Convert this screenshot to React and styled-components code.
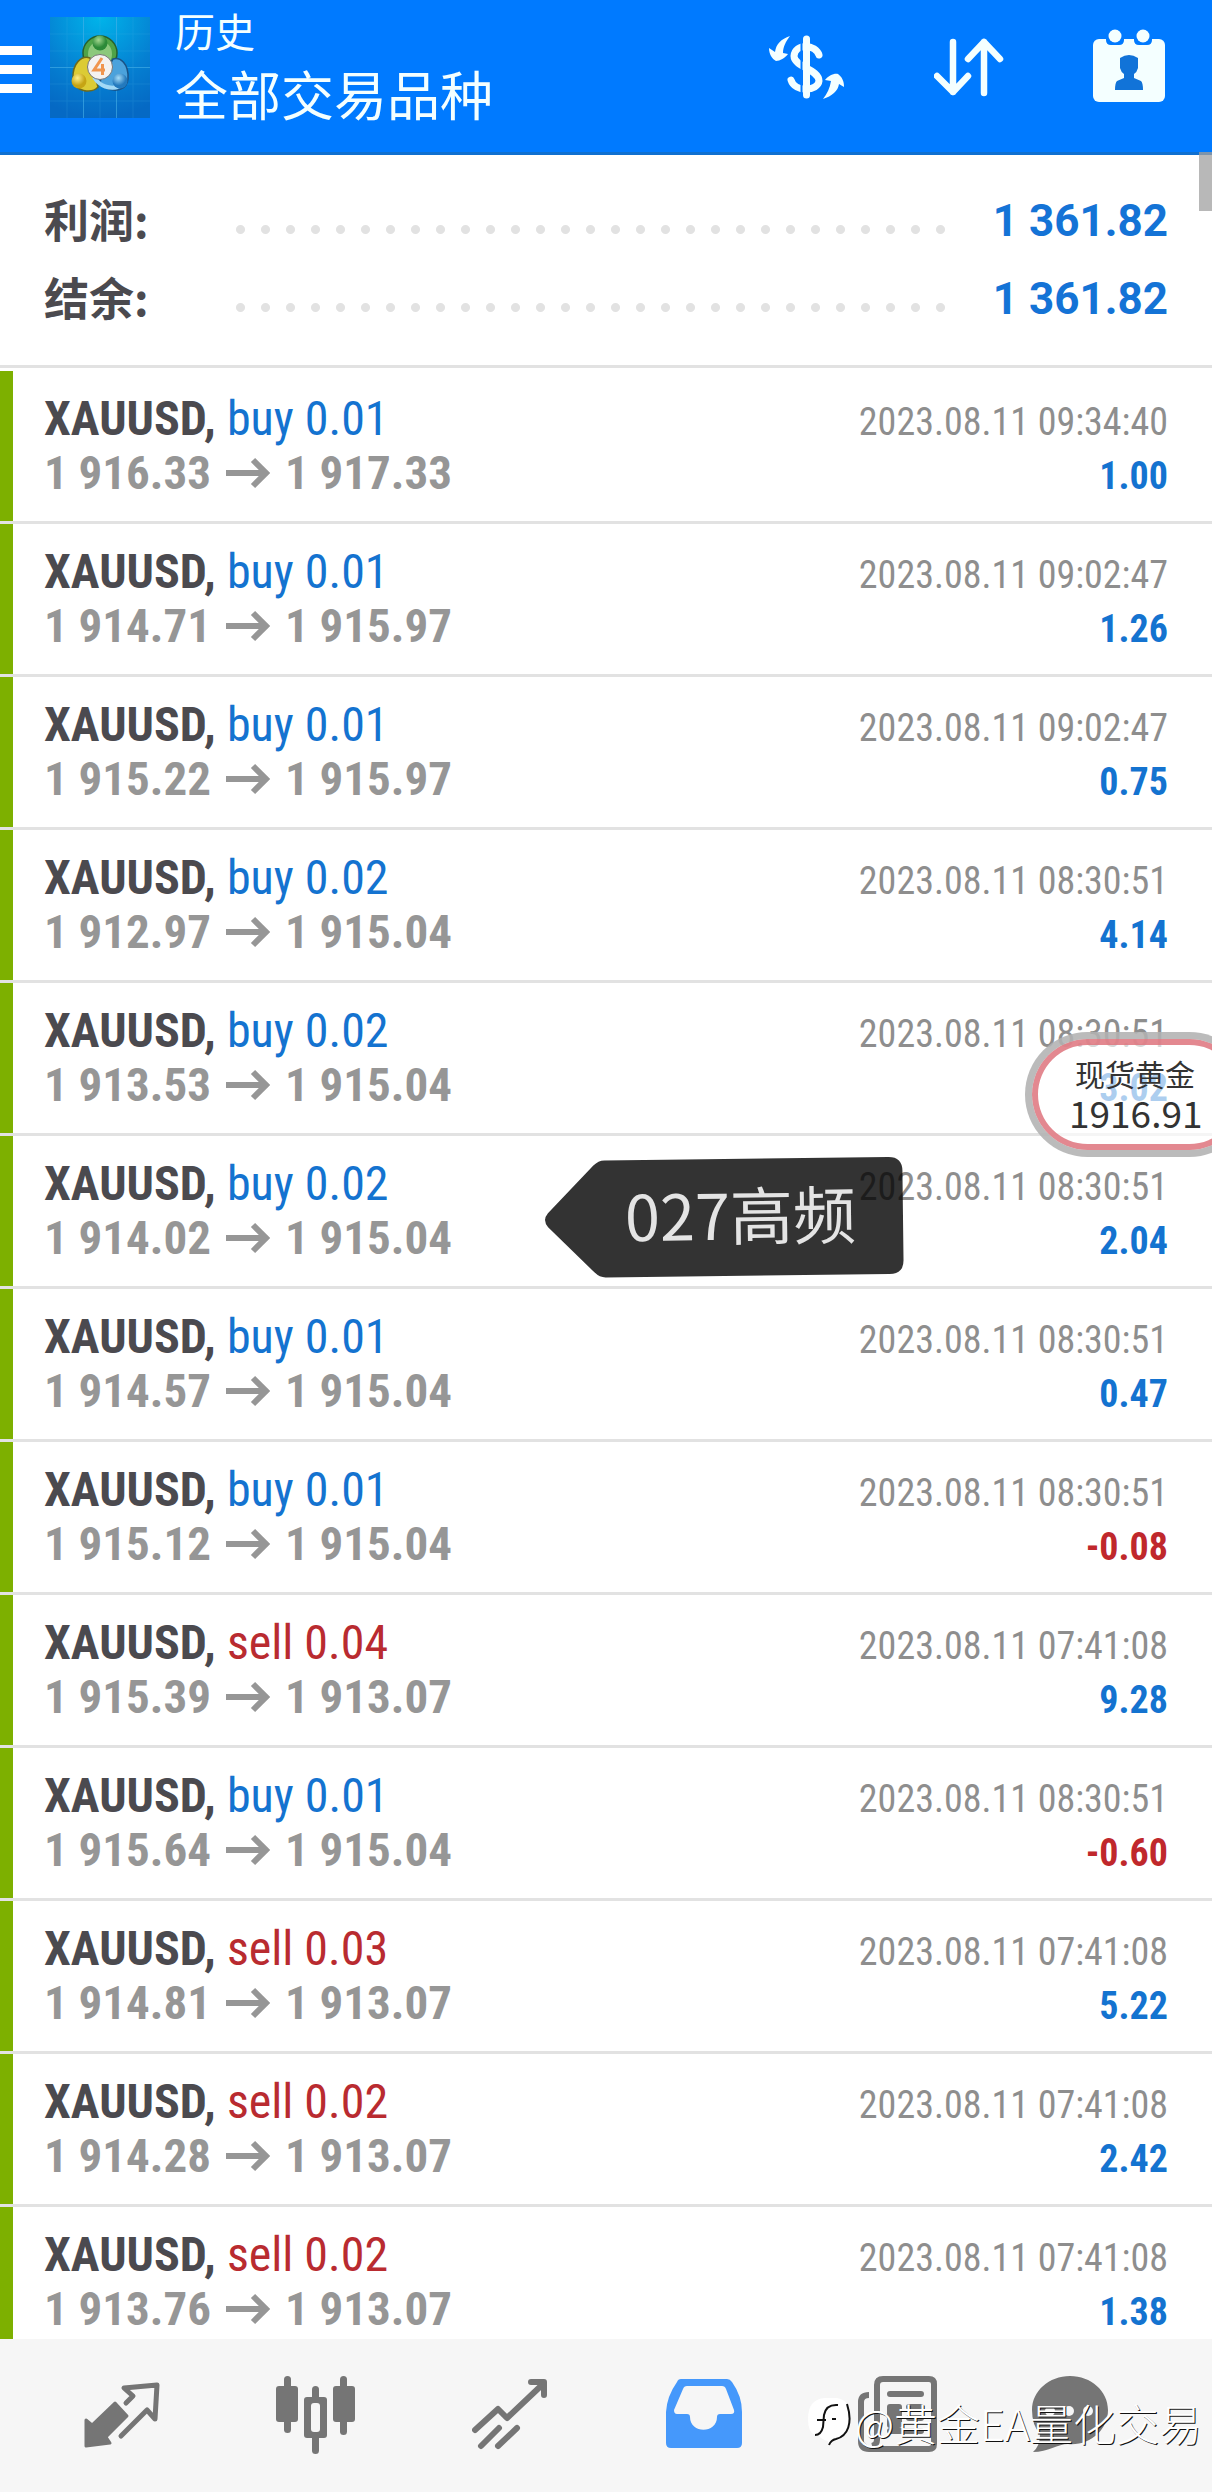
import React from "react";
import styled, { createGlobalStyle } from "styled-components";

const Global = createGlobalStyle`
  * { box-sizing: border-box; }
  body { margin: 0; background: #fff; font-family: "Roboto Condensed", "Liberation Sans Narrow", "Noto Sans CJK SC", sans-serif; }
  button { border: 0; padding: 0; background: none; color: inherit; font: inherit; cursor: pointer; }
  h1, p, dl, dd, dt, ul { margin: 0; padding: 0; font-weight: inherit; }
  svg { display: block; }
`;

const Screen = styled.div`
  display: flex;
  flex-direction: column;
  height: 100vh;
  overflow: hidden;
  position: relative;
  color: #4b4a4f;
`;

const TopBar = styled.header`
  flex: none;
  display: flex;
  align-items: flex-start;
  height: 155px;
  padding-right: 46px;
  background: #007aff;
  border-bottom: 3px solid #1070d0;
  color: #f4ffff;
`;

const MenuButton = styled.button`
  width: 32px;
  height: 48px;
  margin: 46px 18px 0 0;
  display: flex;
  flex-direction: column;
  gap: 10px;
`;

const MenuBar = styled.span`
  display: block;
  width: 100%;
  height: 9px;
  background: #fff;
`;

const LogoBox = styled.div`
  margin-top: 17px;
`;

const Titles = styled.div`
  flex: 1;
  padding-left: 25px;
  font-family: "Noto Sans CJK SC", sans-serif;
`;

const Section = styled.p`
  font-size: 40px;
  line-height: 60px;
`;

const Heading = styled.h1`
  font-size: 53px;
  line-height: 66px;
`;

const Actions = styled.div`
  display: flex;
  gap: 88px;
  padding-top: 29px;
`;

const Summary = styled.dl`
  flex: none;
  display: flex;
  flex-direction: column;
  height: 213px;
  margin-bottom: 3px;
  padding: 26px 44px 0;
  border-bottom: 3px solid #e2e2e2;
`;

const SummaryRow = styled.div`
  display: flex;
  align-items: center;
  height: 78px;
`;

const Label = styled.dt`
  width: 184px;
  padding-bottom: 2px;
  font: 700 45px/64px "Noto Sans CJK SC", sans-serif;
`;

const Dots = styled.span`
  flex: 1;
  height: 25px;
  margin-right: 44px;
  align-self: flex-end;
  margin-bottom: 17px;
  background: radial-gradient(circle, #e2e2e2 0 4px, transparent 5px) 0 0 / 25px 25px repeat-x;
`;

const Total = styled.dd`
  padding-top: 2px;
  font: 700 44px/64px Roboto, sans-serif;
  color: #1473d6;
`;

const List = styled.ul`
  flex: 1;
  min-height: 0;
  overflow: hidden;
  list-style: none;
`;

const Deal = styled.li`
  display: flex;
  height: 153px;
  padding-right: 44px;
  border-bottom: 3px solid #e2e2e2;

  &::before {
    content: "";
    width: 13px;
    margin-right: 31px;
    background: #7db000;
  }
`;

const Side = styled.div`
  padding-top: 21px;
  white-space: nowrap;
  ${(p) => p.$end && "margin-left: auto; text-align: right;"}
`;

const Title = styled.div`
  font-size: 48px;
  line-height: 54px;
  font-weight: 700;
`;

const Order = styled.span`
  font-weight: 400;
  color: ${(p) => (p.$sell ? "#b92b30" : "#1473d0")};
`;

const Prices = styled.div`
  display: flex;
  align-items: center;
  gap: 15px;
  font-size: 47px;
  line-height: 54px;
  font-weight: 700;
  color: #969696;
`;

const Time = styled.time`
  display: block;
  font-size: 38px;
  line-height: 54px;
  padding-top: 3px;
  color: #8e8e8e;
`;

const Profit = styled.div`
  font-size: 38px;
  line-height: 54px;
  font-weight: 700;
  color: ${(p) => (p.$loss ? "#c0282c" : "#1473d0")};
`;

const TabBar = styled.nav`
  flex: none;
  display: grid;
  grid-template-columns: repeat(5, 194fr) 150fr;
  height: 153px;
  padding: 0 67px 0 25px;
  background: #f6f6f6;
`;

const Tab = styled.button`
  display: flex;
  justify-content: center;
  align-items: flex-start;
  padding-top: 35px;
  color: ${(p) => (p.$active ? "#4598fb" : "#757575")};
`;

const ScrollThumb = styled.div`
  position: absolute;
  top: 152px;
  right: 0;
  width: 13px;
  height: 59px;
  background: rgba(160, 160, 160, 0.75);
`;

const QuoteBubble = styled.aside`
  position: absolute;
  top: 1032px;
  right: -40px;
  width: 227px;
  height: 125px;
  padding: 13px 0 0 35px;
  border: 7px solid rgba(150, 150, 150, 0.65);
  border-radius: 63px;
  background: rgba(255, 255, 255, 0.65);
  box-shadow: inset 0 0 0 6px rgba(222, 115, 124, 0.85);
  font-family: "Noto Sans CJK SC", sans-serif;
  color: #333;
`;

const QuoteName = styled.div`
  padding-left: 8px;
  font-size: 30px;
  line-height: 42px;
`;

const QuotePrice = styled.div`
  padding-left: 2px;
  font-size: 37px;
  line-height: 36px;
`;

const Tag = styled.div`
  position: absolute;
  top: 1158px;
  left: 545px;
  width: 359px;
  height: 120px;
  transform: rotate(-0.7deg);
`;

const TagText = styled.span`
  position: absolute;
  inset: 0 0 0 80px;
  font: 400 63px/110px "Noto Sans CJK SC", sans-serif;
  color: #e4e4e4;
`;

const Watermark = styled.div`
  position: absolute;
  right: 10px;
  bottom: 40px;
  display: flex;
  align-items: center;
  gap: 4px;
  font: 300 43px/60px "Noto Sans CJK SC", sans-serif;
  color: #fff;
  text-shadow: 1px 1px 0 #111;
  white-space: nowrap;
`;

const deals = [
  ["buy 0.01", "1 916.33", "1 917.33", "09:34:40", "1.00"],
  ["buy 0.01", "1 914.71", "1 915.97", "09:02:47", "1.26"],
  ["buy 0.01", "1 915.22", "1 915.97", "09:02:47", "0.75"],
  ["buy 0.02", "1 912.97", "1 915.04", "08:30:51", "4.14"],
  ["buy 0.02", "1 913.53", "1 915.04", "08:30:51", "3.02"],
  ["buy 0.02", "1 914.02", "1 915.04", "08:30:51", "2.04"],
  ["buy 0.01", "1 914.57", "1 915.04", "08:30:51", "0.47"],
  ["buy 0.01", "1 915.12", "1 915.04", "08:30:51", "-0.08"],
  ["sell 0.04", "1 915.39", "1 913.07", "07:41:08", "9.28"],
  ["buy 0.01", "1 915.64", "1 915.04", "08:30:51", "-0.60"],
  ["sell 0.03", "1 914.81", "1 913.07", "07:41:08", "5.22"],
  ["sell 0.02", "1 914.28", "1 913.07", "07:41:08", "2.42"],
  ["sell 0.02", "1 913.76", "1 913.07", "07:41:08", "1.38"],
];

const Logo = () => (
  <svg width="100" height="101" viewBox="0 0 100 101" aria-hidden="true">
    <defs>
      <radialGradient id="sky" cx=".5" cy="0" r="1">
        <stop offset="0" stopColor="#00b4ea" />
        <stop offset=".6" stopColor="#0580d2" />
        <stop offset="1" stopColor="#0569c4" />
      </radialGradient>
      <radialGradient id="g" cx=".4" cy=".3"><stop offset="0" stopColor="#a5d890" /><stop offset="1" stopColor="#2c8a38" /></radialGradient>
      <radialGradient id="y" cx=".4" cy=".3"><stop offset="0" stopColor="#fff08a" /><stop offset="1" stopColor="#c6a414" /></radialGradient>
      <radialGradient id="b" cx=".4" cy=".3"><stop offset="0" stopColor="#a5dcf8" /><stop offset="1" stopColor="#2379bd" /></radialGradient>
    </defs>
    <rect width="100" height="101" fill="url(#sky)" />
    <path d="M33.5 0V101M66.500 0V101M0 50.500H100" stroke="#49b2e8" opacity=".6" />
    <path d="M17 0V101M50 0V101M83 0V101M0 17H100M0 34H100M0 67H100M0 84H100" stroke="#49b2e8" opacity=".18" />
    <ellipse cx="50" cy="36" rx="17" ry="17" fill="#4fa348" stroke="#28602d" strokeWidth="1.500" />
    <ellipse cx="50" cy="37" rx="12" ry="13" fill="#8cc87c" />
    <path d="M23 62C22 46 32 38 40 41L48 70C42 77 24 75 23 62Z" fill="#dccb35" stroke="#6e6a1c" strokeWidth="1.500" />
    <path d="M78 62C79 46 70 40 63 42L50 64C52 74 76 79 78 62Z" fill="#4ba2dc" stroke="#1b5285" strokeWidth="1.500" />
    <path d="M44 60C50 70 60 72 68 70" fill="none" stroke="#a2d9f6" strokeWidth="4" />
    <circle cx="50" cy="26" r="7.500" fill="url(#g)" />
    <circle cx="29" cy="64" r="7.500" fill="url(#y)" />
    <circle cx="70" cy="64" r="7.500" fill="url(#b)" />
    <circle cx="50" cy="50" r="12.500" fill="#f4f2f0" stroke="#777" strokeWidth="1" />
    <path d="M52 41L44 53H55M52.500 47V58" fill="none" stroke="#f0954e" strokeWidth="3" />
  </svg>
);

const DollarIcon = () => (
  <svg width="78" height="74" viewBox="768 29 78 74" fill="none" stroke="currentColor">
    <path d="M819 55C816 44 795 43 794 56C794 67 819 69 819 81C818 91 795 93 791 80" strokeWidth="7" strokeLinecap="round" />
    <path d="M801.500 42V96" stroke="#007aff" strokeWidth="2" />
    <path d="M806.500 39V95" strokeWidth="7" strokeLinecap="round" />
    <path d="M790 36C781 39 776 44 775 52L769 48C769 54 772 59 776 61C780 61 785 58 788 54L783 53C783 47 786 41 790 36Z" fill="currentColor" stroke="none" />
    <path d="M823 99C832 96 838 91 839 84L844 87C844 81 842 77 838 74C834 73 828 76 825 80L831 81C830 88 827 94 823 99Z" fill="currentColor" stroke="none" />
  </svg>
);

const SortIcon = () => (
  <svg width="70" height="74" viewBox="934 29 70 74" fill="none" stroke="currentColor" strokeWidth="6.500" strokeLinecap="round" strokeLinejoin="round">
    <path d="M953 42V92M937 76L953 92L968 76M984 93V42M968 59L984 42L1000 59" />
  </svg>
);

const CalendarIcon = () => (
  <svg width="74" height="74" viewBox="1092 29 74 74">
    <rect x="1093" y="39" width="72" height="63" rx="6" fill="currentColor" />
    <path d="M1106 36H1124V40Q1124 45 1119 45H1111Q1106 45 1106 40ZM1134 36H1152V40Q1152 45 1147 45H1139Q1134 45 1134 40Z" fill="#007aff" />
    <circle cx="1115" cy="36" r="6.500" fill="currentColor" />
    <circle cx="1143" cy="36" r="6.500" fill="currentColor" />
    <path d="M1120 58Q1129 52 1138 58V68Q1137 72 1134 74V78L1141 81Q1143 83 1143 90H1115Q1115 83 1117 81L1124 78V74Q1121 72 1120 68Z" fill="#1173d8" />
  </svg>
);

const Arrow = () => (
  <svg width="44" height="32" viewBox="0 0 44 32" fill="none" stroke="currentColor" strokeWidth="6" role="img" aria-label="→">
    <path d="M0 16H38M27 3L40 16L27 29" />
  </svg>
);

const QuotesIcon = () => (
  <svg width="78" height="80" viewBox="83 2374 78 80" fill="currentColor" stroke="currentColor" strokeLinejoin="round">
    <path d="M86 2420L92 2425L115 2403L127 2416L106 2437L110 2443L86 2446Z" strokeWidth="3" />
    <path d="M126 2403L133 2396L124 2388L157 2385L155 2419L147 2410L121 2436" fill="none" strokeWidth="5" strokeLinecap="round" />
  </svg>
);

const CandlesIcon = () => (
  <svg width="80" height="80" viewBox="276 2374 80 80" fill="currentColor">
    <rect x="284" y="2376" width="7" height="57" rx="3.500" />
    <rect x="276" y="2386" width="22" height="36" rx="3" />
    <rect x="340" y="2376" width="7" height="59" rx="3.500" />
    <rect x="333" y="2386" width="22" height="36" rx="3" />
    <rect x="312" y="2386" width="7" height="68" rx="3.500" />
    <rect x="304" y="2397" width="23" height="41" rx="3" />
    <rect x="311" y="2403" width="9" height="29" rx="3" fill="#f6f6f6" />
  </svg>
);

const TrendIcon = () => (
  <svg width="76" height="80" viewBox="472 2374 76 80" fill="none" stroke="currentColor" strokeWidth="6" strokeLinecap="round" strokeLinejoin="round">
    <path d="M475 2430L498 2409L507 2418L543 2384M531 2382H544V2395M481 2446L499 2428M498 2446L517 2428" />
  </svg>
);

const InboxIcon = () => (
  <svg width="76" height="80" viewBox="666 2374 76 80" fill="currentColor" fillRule="evenodd">
    <path d="M681 2379H727Q730 2379 732 2382Q742 2396 742 2412V2443Q742 2448 737 2448H671Q666 2448 666 2443V2412Q667 2396 677 2382Q678 2379 681 2379ZM687 2386Q684 2386 683 2389L674 2410Q674 2414 677 2414H687Q690 2414 690 2417C690 2434 717 2434 717 2417Q717 2414 720 2414H731Q735 2414 734 2410L726 2389Q725 2386 722 2386Z" />
  </svg>
);

const NewsIcon = () => (
  <svg width="80" height="80" viewBox="859 2374 80 80" fill="none" stroke="currentColor" strokeWidth="6">
    <path d="M870 2395Q862 2395 862 2402V2441Q862 2449 870 2449H930Q935 2449 935 2444V2384Q935 2379 930 2379H884Q878 2379 878 2385V2440Q878 2445 873 2446" />
    <path d="M891 2394H922M910 2407H922M910 2418H922M891 2431H922" strokeLinecap="round" />
    <rect x="888" y="2404" width="15" height="24" rx="3" fill="currentColor" stroke="none" />
  </svg>
);

const ChatIcon = () => (
  <svg width="76" height="80" viewBox="1032 2374 76 80" fill="currentColor">
    <path d="M1070 2376C1091 2376 1108 2391 1108 2410C1108 2430 1090 2446 1068 2444C1058 2444 1048 2452 1033 2452Q1040 2446 1040 2434Q1032 2425 1032 2410C1032 2391 1049 2376 1070 2376Z" />
    <circle cx="1050" cy="2411" r="5" fill="#f6f6f6" />
    <circle cx="1069" cy="2411" r="5" fill="#f6f6f6" />
    <circle cx="1088" cy="2411" r="5" fill="#f6f6f6" />
  </svg>
);

const BrandMark = () => (
  <svg width="44" height="50" viewBox="0 0 44 50" aria-hidden="true">
    <path d="M18 1H30Q42 3 42 16V26C42 37 36 43 26 44L21 48V44Q13 42 12 38H8Q1 36 1 22Q1 2 18 1Z" fill="#fff" />
    <path d="M40 7C46 26 41 39 29 42Q24 43 22 48" fill="none" stroke="#111" strokeWidth="2" />
    <path d="M31 8Q19 7 17 18L16 30Q14 38 8 38M10 23H19M25 22H29" fill="none" stroke="#111" strokeWidth="2" />
  </svg>
);

const tabs = [
  ["行情", QuotesIcon],
  ["图表", CandlesIcon],
  ["交易", TrendIcon],
  ["历史", InboxIcon],
  ["新闻", NewsIcon],
  ["聊天", ChatIcon],
];

export default function App() {
  return (
    <Screen>
      <Global />
      <TopBar>
        <MenuButton aria-label="菜单"><MenuBar /><MenuBar /><MenuBar /></MenuButton>
        <LogoBox><Logo /></LogoBox>
        <Titles>
          <Section>历史</Section>
          <Heading>全部交易品种</Heading>
        </Titles>
        <Actions>
          <button aria-label="货币"><DollarIcon /></button>
          <button aria-label="排序"><SortIcon /></button>
          <button aria-label="日期"><CalendarIcon /></button>
        </Actions>
      </TopBar>
      <Summary>
        {["利润:", "结余:"].map((name) => (
          <SummaryRow key={name}>
            <Label>{name}</Label>
            <Dots />
            <Total>1 361.82</Total>
          </SummaryRow>
        ))}
      </Summary>
      <List>
        {deals.map(([order, open, close, time, profit], i) => (
          <Deal key={i}>
            <Side>
              <Title>XAUUSD, <Order $sell={order.startsWith("sell")}>{order}</Order></Title>
              <Prices><span>{open}</span><Arrow /><span>{close}</span></Prices>
            </Side>
            <Side $end>
              <Time>2023.08.11 {time}</Time>
              <Profit $loss={profit.startsWith("-")}>{profit}</Profit>
            </Side>
          </Deal>
        ))}
      </List>
      <TabBar>
        {tabs.map(([name, Icon]) => (
          <Tab key={name} aria-label={name} $active={Icon === InboxIcon}><Icon /></Tab>
        ))}
      </TabBar>
      <ScrollThumb />
      <QuoteBubble>
        <QuoteName>现货黄金</QuoteName>
        <QuotePrice>1916.91</QuotePrice>
      </QuoteBubble>
      <Tag>
        <svg width="359" height="120" viewBox="0 0 359 120" aria-hidden="true">
          <path d="M3 53L49 6Q54 1 60 1H344Q358 1 358 15V104Q358 118 344 118H60Q54 118 49 113L3 67Q-3 60 3 53Z" fill="rgba(0,0,0,.8)" />
        </svg>
        <TagText>027高频</TagText>
      </Tag>
      <Watermark><BrandMark />@黄金EA量化交易</Watermark>
    </Screen>
  );
}
